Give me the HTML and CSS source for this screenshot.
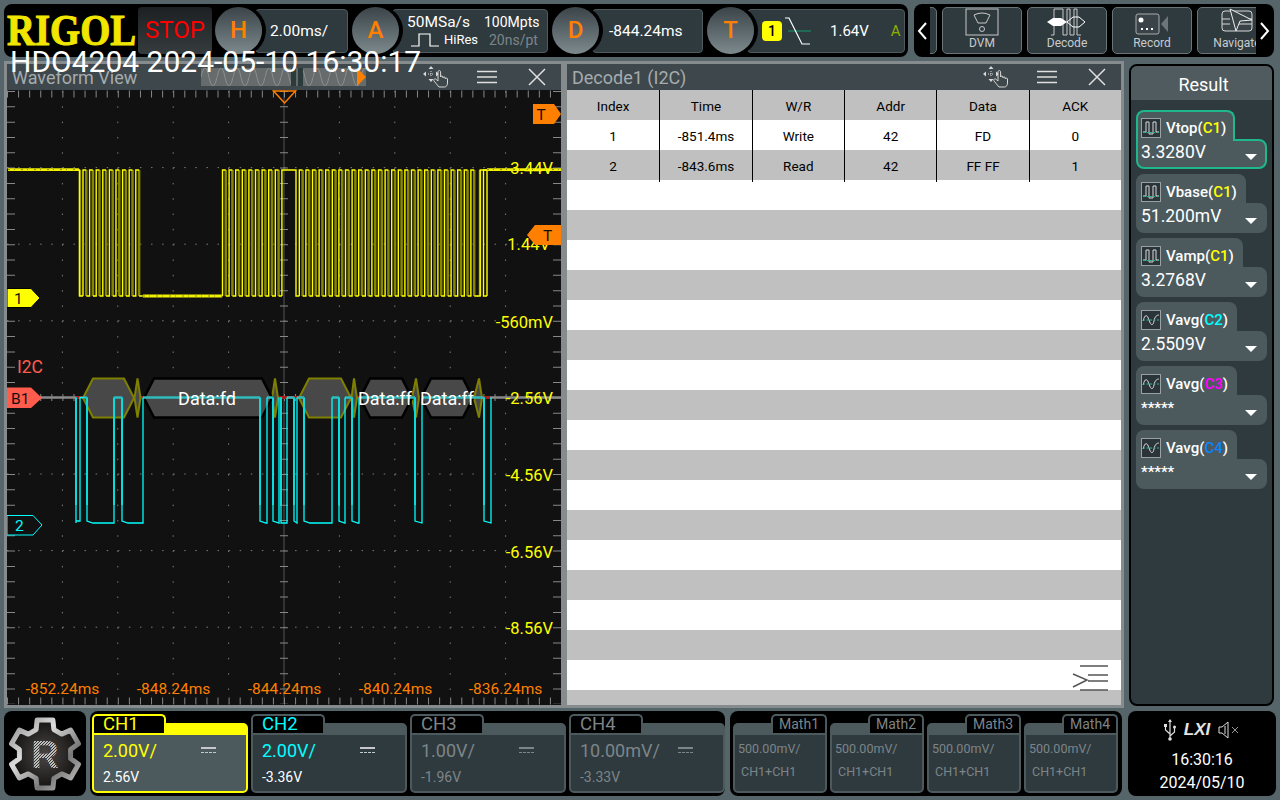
FILE: index.html

```html
<!DOCTYPE html>
<html lang="en">
<head>
  <meta charset="UTF-8" />
  <title>HDO4204 Decode</title>
  <link rel="stylesheet" href="styles.css">
</head>
<body>
  <svg class="defs" width="0" height="0">
    <symbol id="i-move" viewBox="0 0 28 22">
      <path d="M8 0l2.500 3h-5zM8 16l2.500-3h-5zM0 8l3-2.500v5zM16 8l-3-2.500v5z" fill="#d8d8d8"/>
      <path d="M5 8h6M8 5v6" stroke="#d8d8d8" stroke-dasharray="1 1" fill="none"/>
      <g transform="translate(9 3)">
        <path d="M7 18L2 12c-1-1.500 1-3 2.200-1.500L6 12V3c0-2 2.600-2 2.600 0v5c0-1.300 2.400-1.300 2.400 0v1c0-1.300 2.300-1.300 2.300 0v1c0-1.200 2.200-1.200 2.200 0v4c0 2-1 4-3 4z" fill="#3e474b" stroke="#d8d8d8"/>
      </g>
    </symbol>
    <symbol id="i-menu" viewBox="0 0 20 14">
      <path d="M0 1.500h20M0 7h20M0 12.500h20" stroke="#e0e0e0" stroke-width="1.500" fill="none"/>
    </symbol>
    <symbol id="i-close" viewBox="0 0 18 18">
      <path d="M1 1l16 16M17 1L1 17" stroke="#e0e0e0" stroke-width="1.500" fill="none"/>
    </symbol>
    <symbol id="i-meas" viewBox="0 0 20 20">
      <rect x=".5" y=".5" width="19" height="19" fill="#2b3438" stroke="#9aa2a4"/>
      <path d="M2 14h3V4h3v12h4V4h3v10h3" fill="none" stroke="#d8d8d8"/>
      <path d="M2 14.500h16" stroke="#25b98e" stroke-dasharray="2 1.500"/>
    </symbol>
    <symbol id="i-avg" viewBox="0 0 20 20">
      <rect x=".5" y=".5" width="19" height="19" fill="#2b3438" stroke="#9aa2a4"/>
      <path d="M2 11C4 4 6 4 8 10s4 6 5 1 3-6 5-6" fill="none" stroke="#d8d8d8"/>
      <path d="M2 10h16" stroke="#25b98e" stroke-dasharray="2 1.500"/>
    </symbol>
    <path id="clk9b" d="m0 296v-126h3.300m0 126h3.300v-126h3.300m0 126h3.300v-126h3.300m0 126h3.300v-126h3.300m0 126h3.300v-126h3.300m0 126h3.300v-126h3.300m0 126h3.300v-126h3.300m0 126h3.300v-126h3.300m0 126h3.300v-126h3.300m0 126h3.300"/>
    <path id="clk9d" d="m3.300 170v126m6.600-126v126m6.600-126v126m6.600-126v126m6.600-126v126m6.600-126v126m6.600-126v126m6.600-126v126m6.600-126v126"/>
  </svg>

  <div class="stamp">HDO4204 2024-05-10 16:30:17</div>

  <header class="top">
    <div class="status-bar">
      <div class="logo"><span>RIGOL</span></div>
      <div class="stop">STOP</div>

      <div class="knob">H</div>
      <div class="readout r-h"><span class="big">2.00ms/</span></div>

      <div class="knob">A</div>
      <div class="readout r-a">
        <span class="big">50MSa/s</span>
        <span class="mid">100Mpts</span>
        <span class="hires">
          <svg width="28" height="14" viewBox="0 0 28 14"><path d="M0 13h8V1h11v12h9" fill="none" stroke="#fff" stroke-width="1.200"/></svg>
          HiRes
        </span>
        <span class="mid dim pts">20ns/pt</span>
      </div>

      <div class="knob">D</div>
      <div class="readout r-d"><span class="big">-844.24ms</span></div>

      <div class="knob">T</div>
      <div class="readout r-t">
        <span class="badge">1</span>
        <svg class="slope" width="26" height="30" viewBox="0 0 26 30"><path d="M3 15h24" stroke="#1f7a5e" stroke-width="1.500"/><path d="M0 2h4l13 26h8" fill="none" stroke="#fff" stroke-width="1.200"/></svg>
        <span class="big trig-level">1.64V</span>
        <span class="trig-src">A</span>
      </div>
    </div>

    <nav class="menu-bar">
      <div class="arrow"><svg width="12" height="20" viewBox="0 0 12 20"><path d="M10 2L3 10l7 8" fill="none" stroke="#fff" stroke-width="2"/></svg></div>
      <div class="menu-cards">
        <div class="menu-card"></div>
        <div class="menu-card">
          <svg width="34" height="28" viewBox="0 0 34 28"><rect x="1" y="1" width="32" height="26" fill="none" stroke="#c8c8c8"/><path d="M9 7q8-4 16 0l-4 8h-8z" fill="none" stroke="#c8c8c8"/><circle cx="17" cy="21" r="2.500" fill="none" stroke="#c8c8c8"/></svg>
          <span>DVM</span>
        </div>
        <div class="menu-card">
          <svg width="40" height="28" viewBox="0 0 40 28"><path d="M4 27h3V1h9v26h4V1h3v26h4V1h3v26h4" fill="none" stroke="#c8c8c8"/><path d="M0 14l6-4h8l6 4-6 4H6z" fill="#fff"/><path d="M20 14l6-5h6l6 5-6 5h-6z" fill="none" stroke="#fff"/></svg>
          <span>Decode</span>
        </div>
        <div class="menu-card">
          <svg width="34" height="24" viewBox="0 0 34 24"><rect x="1" y="2" width="23" height="20" rx="2" fill="#3a4448" stroke="#aaa"/><circle cx="6" cy="8" r="2.500" fill="#fff"/><path d="M6 17h2M11 17h2M16 17h2" stroke="#fff" stroke-width="2"/><path d="M26 12l7-8v16z" fill="#6d7578"/></svg>
          <span>Record</span>
        </div>
        <div class="menu-card">
          <svg width="34" height="28" viewBox="0 0 34 28"><rect x="2" y="3" width="30" height="20" rx="3" fill="#3a4448" stroke="#d8d8d8"/><path d="M2 11h8M2 16h8M20 11h12M18 16h14" stroke="#d8d8d8"/><path d="M10 1l22 11-12 1-4 10z" fill="#3a4448" stroke="#eee"/></svg>
          <span>Navigate</span>
        </div>
      </div>
      <div class="arrow"><svg width="12" height="20" viewBox="0 0 12 20"><path d="M2 2l7 8-7 8" fill="none" stroke="#fff" stroke-width="2"/></svg></div>
    </nav>
  </header>

  <main class="main">
    <section class="win">
      <div class="win-title">
        <span class="win-name">Waveform View</span>
        <svg class="thumb" width="165" height="18" viewBox="0 0 165 18">
          <defs><pattern id="sine" width="16" height="18" patternUnits="userSpaceOnUse"><path d="M0 9Q4-9 8 9t8 0" fill="none" stroke="#8e8e8e"/></pattern></defs>
          <rect width="165" height="18" fill="#666b6c"/>
          <rect width="165" height="18" fill="url(#sine)"/>
          <rect x="90" width="12" height="18" fill="#2b3a3a"/>
          <path d="M96 0v18" stroke="#9a9a9a"/>
          <path d="M156 0l9 9-9 9z" fill="#ff8000"/>
        </svg>
        <div class="win-tools">
          <svg class="t-move"><use href="#i-move"/></svg>
          <svg class="t-menu"><use href="#i-menu"/></svg>
          <svg class="t-close"><use href="#i-close"/></svg>
        </div>
      </div>

      <svg class="plot" viewBox="7 90 554 615" width="554" height="615">
        <rect x="7" y="90" width="554" height="615" fill="#111"/>
        <!-- grid -->
        <g class="grid-dots-v">
          <path d="M62.400 91V704M117.800 91V704M173.200 91V704M228.600 91V704M339.400 91V704M394.800 91V704M450.200 91V704M505.600 91V704"/>
        </g>
        <g class="grid-dots-h">
          <path d="M7 167.600H561M7 244.200H561M7 320.800H561M7 474H561M7 550.600H561M7 627.200H561"/>
        </g>
        <path class="axis" d="M284 91V704"/>
        <path class="ticks-v" d="M11 91V704M284 91V704M557 91V704"/>
        <path class="ticks-h" d="M7 94H561M7 701H561M7 397.400H561"/>

        <!-- decode bus -->
        <path d="M40 397.500H76M490 397.500H561" stroke="#8a8a8a" stroke-width="2.500"/>
        <path d="M76 397.500H490" stroke="#a81c1c" stroke-width="3"/>
        <g class="bus-addr">
          <polygon points="83,398 93,378.500 124,378.500 134,398 124,417.500 93,417.500"/>
          <polygon points="299,398 309,378.500 341,378.500 351,398 341,417.500 309,417.500"/>
          <polygon points="134.500,398 137.500,378.500 140.500,398 137.500,417.500"/>
          <polygon points="272,398 275,378.500 278,398 275,417.500"/>
          <polygon points="351.500,398 354,378.500 357,398 354,417.500"/>
          <polygon points="412,398 416,378.500 419,398 416,417.500"/>
          <polygon points="474,398 479,378.500 482,398 479,417.500"/>
        </g>
        <g class="bus-data">
          <polygon points="144,398 154,378.500 262,378.500 272,398 262,417.500 154,417.500"/>
          <polygon points="360,398 370,378.500 402,378.500 412,398 402,417.500 370,417.500"/>
          <polygon points="421,398 431,378.500 463,378.500 473,398 463,417.500 431,417.500"/>
        </g>

        <!-- CH2 -->
        <path class="teal" d="M84 397.500H87M114 397.500H122M143 397.500H260M267 397.500H273M287 397.500H294M297 397.500H304M332 397.500H339M345 397.500H352M359 397.500H415M422 397.500H484"/>
        <path class="teal-edge" d="M76 397V505M87 397V505M114 397V505M122 397V505M260 397V505M273 397V505M281 397V505M294 397V505M304 397V505M339 397V505M352 397V505M415 397V505M484 397V505"/>
        <path class="cyan" d="M76 523V397.500M76 521H80V397.500H84M87 397.500V521l6 2H114V397.500M122 397.500V521l6 2H143V397.500M260 397.500V521l6 2H267V397.500M273 397.500V521l6 2V397.500M281 397.500V523H287V397.500M294 397.500V521l3 2V397.500M304 397.500V521l6 2H332V397.500M339 397.500V521l6 2V397.500M352 397.500V521l6 2H359V397.500M415 397.500V521l7 2V397.500M484 397.500V521l7 2V397.500"/>

        <!-- CH1 -->
        <g class="ch1-dim">
          <use href="#clk9d" x="83"/>
          <use href="#clk9d" x="222.500"/>
          <use href="#clk9d" x="299.300"/>
          <use href="#clk9d" x="358.700"/>
          <use href="#clk9d" x="418.100"/>
          <path d="M80 170V296M480 170V296"/>
        </g>
        <g class="ch1">
          <path d="M8 170H79.500V296H83M142.400 296H222.500M281.900 296V170H296V296H299.300M476.900 296H480.200V170H487V296"/>
          <use href="#clk9b" x="83"/>
          <use href="#clk9b" x="222.500"/>
          <use href="#clk9b" x="299.300"/>
          <use href="#clk9b" x="358.700"/>
          <use href="#clk9b" x="418.100"/>
          <path d="M487 296h-3.500V170H561"/>
        </g>
        <path class="ch1-flat" d="M8 169.600H79M143 296H222M487 169.600H561"/>
        <path class="ch1-noise" d="M8 169.600H79M143 296H222M487 169.600H561"/>

        <!-- labels -->
        <g class="volts">
          <text x="553" y="174">3.44V</text>
          <text x="550" y="250">1.44V</text>
          <text x="553" y="328">-560mV</text>
          <text x="553" y="404">-2.56V</text>
          <text x="553" y="481">-4.56V</text>
          <text x="553" y="558">-6.56V</text>
          <text x="553" y="634">-8.56V</text>
        </g>
        <g class="times">
          <text x="62.500" y="694">-852.24ms</text>
          <text x="173.500" y="694">-848.24ms</text>
          <text x="284.500" y="694">-844.24ms</text>
          <text x="395.500" y="694">-840.24ms</text>
          <text x="505.500" y="694">-836.24ms</text>
        </g>
        <text class="bus-name" x="17" y="373">I2C</text>
        <g class="bus-text">
          <text x="207" y="405">Data:fd</text>
          <text x="385" y="405">Data:ff</text>
          <text x="447" y="405">Data:ff</text>
        </g>

        <!-- markers -->
        <polygon points="7,288.500 31,288.500 40,298 31,307.500 7,307.500" fill="#ff0" stroke="#000"/>
        <text class="mark" x="14" y="304">1</text>
        <polygon points="7,387.500 31,387.500 42,398 31,408 7,408" fill="#ff5c4d"/>
        <text class="mark" x="11" y="404">B1</text>
        <polygon points="7,515.500 33,515.500 42,525 33,535 7,535" fill="#111" stroke="#0ff"/>
        <text class="mark cy" x="15" y="531">2</text>
        <polygon points="533,104 554,104 561,114 554,124 533,124" fill="#ff8000"/>
        <text class="mark" x="536.500" y="120">T</text>
        <polygon points="527,235 535,225 561,225 561,245 535,245" fill="#ff8000"/>
        <text class="mark" x="543" y="241">T</text>
        <polygon points="273.500,91 295.500,91 284.500,103" fill="none" stroke="#ff8000" stroke-width="1.500"/>
      </svg>
    </section>

    <section class="win">
      <div class="win-title">
        <span class="win-name">Decode1 (I2C)</span>
        <div class="win-tools">
          <svg class="t-move"><use href="#i-move"/></svg>
          <svg class="t-menu"><use href="#i-menu"/></svg>
          <svg class="t-close"><use href="#i-close"/></svg>
        </div>
      </div>
      <div class="table">
        <div class="row"><span>Index</span><span>Time</span><span>W/R</span><span>Addr</span><span>Data</span><span>ACK</span></div>
        <div class="row"><span>1</span><span>-851.4ms</span><span>Write</span><span>42</span><span>FD</span><span>0</span></div>
        <div class="row"><span>2</span><span>-843.6ms</span><span>Read</span><span>42</span><span>FF FF</span><span>1</span></div>
        <div class="row"></div><div class="row"></div><div class="row"></div><div class="row"></div>
        <div class="row"></div><div class="row"></div><div class="row"></div><div class="row"></div>
        <div class="row"></div><div class="row"></div><div class="row"></div><div class="row"></div>
        <div class="row"></div><div class="row"></div><div class="row"></div><div class="row"></div>
        <div class="row"></div><div class="row"></div>
        <svg class="collapse" width="36" height="26" viewBox="0 0 36 26">
          <path d="M1 9l14 6L1 22M8 1h28M16 10h20M16 16h20M8 25h28" fill="none" stroke="#555" stroke-width="1.500"/>
        </svg>
      </div>
    </section>

    <aside class="result">
      <div class="result-title">Result</div>
      <div class="result-list">
        <div class="meas active">
          <div class="meas-head"><svg class="meas-icon"><use href="#i-meas"/></svg><span>Vtop(<b class="c1">C1</b>)</span></div>
          <div class="meas-val"><span>3.3280V</span><i></i></div>
        </div>
        <div class="meas">
          <div class="meas-head"><svg class="meas-icon"><use href="#i-meas"/></svg><span>Vbase(<b class="c1">C1</b>)</span></div>
          <div class="meas-val"><span>51.200mV</span><i></i></div>
        </div>
        <div class="meas">
          <div class="meas-head"><svg class="meas-icon"><use href="#i-meas"/></svg><span>Vamp(<b class="c1">C1</b>)</span></div>
          <div class="meas-val"><span>3.2768V</span><i></i></div>
        </div>
        <div class="meas">
          <div class="meas-head"><svg class="meas-icon"><use href="#i-avg"/></svg><span>Vavg(<b class="c2">C2</b>)</span></div>
          <div class="meas-val"><span>2.5509V</span><i></i></div>
        </div>
        <div class="meas">
          <div class="meas-head"><svg class="meas-icon"><use href="#i-avg"/></svg><span>Vavg(<b class="c3">C3</b>)</span></div>
          <div class="meas-val"><span class="stars">*****</span><i></i></div>
        </div>
        <div class="meas">
          <div class="meas-head"><svg class="meas-icon"><use href="#i-avg"/></svg><span>Vavg(<b class="c4">C4</b>)</span></div>
          <div class="meas-val"><span class="stars">*****</span><i></i></div>
        </div>
      </div>
    </aside>
  </main>

  <footer class="bottom">
    <div class="gear-box">
      <svg width="74" height="74" viewBox="-1 -1 74 74">
        <defs>
          <linearGradient id="steel" x1="0" y1="0" x2="1" y2="1">
            <stop offset="0" stop-color="#8d8d8d"/><stop offset=".35" stop-color="#dcdcdc"/><stop offset=".7" stop-color="#777"/><stop offset="1" stop-color="#c8c8c8"/>
          </linearGradient>
          <radialGradient id="gear-in">
            <stop offset="0" stop-color="#4a4644"/><stop offset="1" stop-color="#161514"/>
          </radialGradient>
          <pattern id="hatch" width="3" height="3" patternUnits="userSpaceOnUse">
            <rect width="3" height="3" fill="#bdbdbd"/><path d="M0 3L3 0" stroke="#333"/>
          </pattern>
        </defs>
        <polygon class="gear" points="27.1,11.600 28.100,1.900 43.900,1.900 44.900,11.600 52.700,16.100 61.600,12.100 69.500,25.800 61.600,31.500 61.600,40.500 69.500,46.200 61.600,59.900 52.700,55.900 44.900,60.400 43.900,70.100 28.100,70.100 27.100,60.400 19.300,55.900 10.400,59.900 2.500,46.200 10.400,40.500 10.400,31.500 2.500,25.800 10.400,12.100 19.300,16.100"/>
        <text class="gear-r" x="36" y="50">R</text>
      </svg>
    </div>

    <div class="channels">
      <div class="ch ch-1">
        <div class="ch-head"><span class="ch-tab">CH1</span><span class="ch-fill"></span></div>
        <div class="ch-body">
          <div class="ch-row"><span class="ch-scale">2.00V/</span><span class="coupling"></span></div>
          <div class="ch-off">2.56V</div>
        </div>
      </div>
      <div class="ch ch-2">
        <div class="ch-head"><span class="ch-tab">CH2</span><span class="ch-fill"></span></div>
        <div class="ch-body">
          <div class="ch-row"><span class="ch-scale">2.00V/</span><span class="coupling"></span></div>
          <div class="ch-off">-3.36V</div>
        </div>
      </div>
      <div class="ch ch-dis">
        <div class="ch-head"><span class="ch-tab">CH3</span><span class="ch-fill"></span></div>
        <div class="ch-body">
          <div class="ch-row"><span class="ch-scale">1.00V/</span><span class="coupling"></span></div>
          <div class="ch-off">-1.96V</div>
        </div>
      </div>
      <div class="ch ch-dis">
        <div class="ch-head"><span class="ch-tab">CH4</span><span class="ch-fill"></span></div>
        <div class="ch-body">
          <div class="ch-row"><span class="ch-scale">10.00mV/</span><span class="coupling"></span></div>
          <div class="ch-off">-3.33V</div>
        </div>
      </div>
    </div>

    <div class="maths">
      <div class="math">
        <div class="math-head"><span class="math-fill"></span><span class="math-tab">Math1</span></div>
        <div class="math-body"><span>500.00mV/</span><span class="math-src">CH1+CH1</span></div>
      </div>
      <div class="math">
        <div class="math-head"><span class="math-fill"></span><span class="math-tab">Math2</span></div>
        <div class="math-body"><span>500.00mV/</span><span class="math-src">CH1+CH1</span></div>
      </div>
      <div class="math">
        <div class="math-head"><span class="math-fill"></span><span class="math-tab">Math3</span></div>
        <div class="math-body"><span>500.00mV/</span><span class="math-src">CH1+CH1</span></div>
      </div>
      <div class="math">
        <div class="math-head"><span class="math-fill"></span><span class="math-tab">Math4</span></div>
        <div class="math-body"><span>500.00mV/</span><span class="math-src">CH1+CH1</span></div>
      </div>
    </div>

    <div class="clock">
      <div class="clock-icons">
        <svg width="12" height="22" viewBox="0 0 12 22"><path d="M6 1v20M6 15L1.500 11V7M6 17l4.500-4V9" fill="none" stroke="#ddd" stroke-width="1.200"/><path d="M6 0l2 3H4z" fill="#ddd"/><rect x="0" y="5" width="3" height="3" fill="#ddd"/><circle cx="10.500" cy="8" r="1.500" fill="#ddd"/><circle cx="6" cy="20" r="1.800" fill="#ddd"/></svg>
        <span class="lxi">LXI</span>
        <svg width="22" height="18" viewBox="0 0 22 18"><path d="M1 6v6h3l6 5V1L4 6z" fill="none" stroke="#ddd"/><path d="M7 5v8" stroke="#ddd"/><path d="M14 6l6 6M20 6l-6 6" stroke="#999"/></svg>
      </div>
      <div class="clock-time">16:30:16</div>
      <div class="clock-date">2024/05/10</div>
    </div>
  </footer>
</body>
</html>
```

FILE: styles.css

```css
* {
  box-sizing: border-box;
}

body {
  position: relative;
  margin: 0;
  width: 1280px;
  height: 800px;
  padding: 4px;
  overflow: hidden;
  background: #55656a;
  color: #fff;
  font-family: Roboto, "Liberation Sans", sans-serif;
}

.defs {
  position: absolute;
}

.stamp {
  position: absolute;
  left: 10px;
  top: 44px;
  z-index: 5;
  font-size: 30px;
  line-height: 36px;
  white-space: nowrap;
  color: #fff;
}

/* top bar */
.top {
  display: flex;
  gap: 6px;
  height: 53px;
}

.status-bar {
  display: flex;
  align-items: center;
  width: 904px;
  background: #000;
  border-radius: 8px;
}

.logo {
  width: 134px;
  padding-left: 3px;
}

.logo span {
  display: inline-block;
  font-family: "Liberation Serif", serif;
  font-weight: bold;
  font-size: 44px;
  line-height: 40px;
  color: #f2e600;
  transform: scaleX(.88);
  transform-origin: left center;
  -webkit-text-stroke: 1px #f2e600;
}

.stop {
  width: 74px;
  height: 47px;
  margin-right: 3px;
  border-radius: 4px;
  background: linear-gradient(#1c2022, #363c3e);
  color: #f00;
  font-size: 24px;
  line-height: 47px;
  text-align: center;
}

.knob {
  position: relative;
  z-index: 1;
  flex: none;
  width: 47px;
  height: 47px;
  border-radius: 50%;
  background: linear-gradient(#3b4448, #7d8a8e);
  box-shadow: 0 0 0 1px #000, 2px 0 0 2px #000;
  color: #ff8000;
  font-size: 24px;
  font-weight: 500;
  line-height: 47px;
  text-align: center;
}

.readout {
  height: 44px;
  margin: 0 4px 0 -7px;
  background: #2f3a3f;
  border: 1px solid #4e5a5e;
  border-radius: 4px;
  white-space: nowrap;
}

.big {
  font-size: 15.5px;
}

.mid {
  font-size: 14px;
}

.dim {
  color: #7d8588;
}

.pts {
  padding-left: 5px;
}

.r-h {
  display: flex;
  align-items: center;
  width: 93px;
  padding-left: 14px;
}

.r-a {
  display: grid;
  grid-template-columns: 77px 1fr;
  align-content: center;
  width: 156px;
  padding-left: 14px;
  line-height: 18px;
}

.hires {
  display: flex;
  align-items: center;
  gap: 5px;
  padding-left: 4px;
  font-size: 13px;
}

.r-d {
  display: flex;
  align-items: center;
  width: 111px;
  padding-left: 16px;
}

.r-t {
  display: flex;
  align-items: center;
  width: 158px;
  margin-right: 0;
  padding-left: 14px;
}

.badge {
  width: 20px;
  height: 20px;
  margin-right: 3px;
  border-radius: 4px;
  background: #ff0;
  color: #000;
  font-size: 14px;
  font-weight: 500;
  line-height: 20px;
  text-align: center;
}

.trig-level {
  margin-left: 19px;
  font-size: 15px;
}

.trig-src {
  margin-left: 22px;
  color: #8db000;
  font-size: 15px;
}

.menu-bar {
  display: flex;
  align-items: center;
  width: 360px;
  background: #000;
  border-radius: 8px;
}

.arrow {
  display: flex;
  justify-content: center;
  flex: none;
  width: 16px;
}

.arrow:last-child {
  width: 18px;
}

.menu-cards {
  display: flex;
  gap: 5px;
  width: 326px;
  overflow: hidden;
}

.menu-card {
  display: flex;
  flex: none;
  flex-direction: column;
  align-items: center;
  justify-content: flex-end;
  width: 80px;
  height: 47px;
  padding-bottom: 2px;
  background: #2f3a3f;
  border: 1px solid #6a7578;
  border-radius: 5px;
  color: #c8cccd;
  font-size: 12px;
  line-height: 15px;
}

.menu-card:first-child {
  margin-left: -73px;
}

/* main */
.main {
  display: flex;
  height: 647px;
  margin-top: 4px;
}

.win {
  display: flex;
  flex-direction: column;
  width: 560px;
  border: 3px solid #868c8e;
  background: #111;
}

.win-title {
  display: flex;
  align-items: center;
  flex: none;
  height: 26px;
  padding-left: 5px;
  background: #3e474b;
}

.win-name {
  color: #a6acae;
  font-size: 18px;
  white-space: nowrap;
}

.thumb {
  margin-left: 64px;
}

.win-tools {
  display: flex;
  align-items: center;
  margin-left: auto;
  padding-right: 15px;
}

.t-move {
  width: 28px;
  height: 22px;
  margin-right: 26px;
}

.t-menu {
  width: 20px;
  height: 14px;
  margin-right: 31px;
}

.t-close {
  width: 18px;
  height: 18px;
}

.plot {
  display: block;
  flex: none;
}

.grid-dots-v path {
  stroke: #7c7c7c;
  stroke-dasharray: 1.5 13.82;
  fill: none;
}

.grid-dots-h path {
  stroke: #7c7c7c;
  stroke-dasharray: 1.5 9.58;
  fill: none;
}

.axis {
  stroke: #555;
  fill: none;
}

.ticks-v {
  stroke: #888;
  stroke-width: 8px;
  stroke-dasharray: 1 14.32;
  fill: none;
}

.ticks-h {
  stroke: #888;
  stroke-width: 7px;
  stroke-dasharray: 1 10.08;
  fill: none;
}

.bus-addr polygon {
  fill: #484848;
  stroke: #7f7f00;
  stroke-width: 2px;
}

.bus-data polygon {
  fill: #484848;
  stroke: #000;
  stroke-width: 2.5px;
}

.teal {
  stroke: #2fbcbc;
  stroke-width: 2.5px;
  fill: none;
}

.teal-edge {
  stroke: #1a9a9a;
  stroke-width: 2px;
  fill: none;
}

.cyan {
  stroke: #0ff;
  stroke-width: 1.3px;
  fill: none;
}

.ch1-dim {
  stroke: #868600;
  stroke-width: 2.5px;
  fill: none;
}

.ch1 {
  stroke: #ff0;
  stroke-width: 1.4px;
  fill: none;
}

.ch1-flat {
  stroke: #f0f000;
  stroke-width: 2.8px;
  fill: none;
}

.ch1-noise {
  stroke: #8a8a00;
  stroke-width: 1px;
  stroke-dasharray: 2 4 1 6;
  fill: none;
}

.volts text {
  fill: #ff0;
  font-size: 16.5px;
  text-anchor: end;
}

.times text {
  fill: #ff8000;
  font-size: 15.5px;
  text-anchor: middle;
}

.bus-name {
  fill: #ff5c4d;
  font-size: 17.5px;
}

.bus-text text {
  fill: #fff;
  font-size: 18px;
  text-anchor: middle;
}

.mark {
  fill: #111;
  font-size: 15.5px;
}

.mark.cy {
  fill: #0ff;
}

/* decode table */
.table {
  position: relative;
  flex: 1;
  overflow: hidden;
  background: #fff;
}

.row {
  display: grid;
  grid-template-columns: repeat(6, 1fr);
  height: 30px;
  color: #000;
  font-size: 13.5px;
  line-height: 32px;
  text-align: center;
}

.row:nth-child(odd) {
  background: #c0c0c0;
}

.row span + span {
  border-left: 1px solid #000;
}

.collapse {
  position: absolute;
  right: 13px;
  bottom: 14px;
}

/* result panel */
.result {
  display: flex;
  flex-direction: column;
  width: 145px;
  height: 642px;
  margin: 3px 0 0 5px;
  background: #2f3a3f;
  border: 2px solid #000;
  border-radius: 8px;
  overflow: hidden;
}

.result-title {
  flex: none;
  height: 34px;
  padding-left: 4px;
  background: #4f5b5e;
  font-size: 18px;
  line-height: 38px;
  text-align: center;
}

.result-list {
  display: flex;
  flex-direction: column;
  gap: 5px;
  padding: 10px 5px;
}

.meas-head {
  position: relative;
  z-index: 1;
  display: flex;
  align-items: center;
  gap: 5px;
  width: fit-content;
  height: 31px;
  margin-bottom: -2px;
  padding: 2px 7px 0 3px;
  background: #4c5a5e;
  border: 2px solid transparent;
  border-bottom: 0;
  border-radius: 8px 8px 0 0;
  font-size: 15px;
  font-weight: 500;
  white-space: nowrap;
}

.meas-icon {
  width: 20px;
  height: 20px;
}

.meas-head b {
  font-weight: 500;
}

.c1 { color: #ff0; }
.c2 { color: #0ff; }
.c3 { color: #f0f; }
.c4 { color: #0a84ff; }

.meas-val {
  display: flex;
  align-items: center;
  justify-content: space-between;
  height: 30px;
  padding: 0 8px 4px 3px;
  background: #4c5a5e;
  border: 2px solid transparent;
  border-radius: 0 8px 8px 8px;
  font-size: 17.5px;
}

.meas-val i {
  margin-top: 9px;
  border-style: solid;
  border-width: 6px 6px 0;
  border-color: #fff transparent transparent;
}

.stars {
  font-size: 15px;
  font-weight: 500;
}

.active .meas-head,
.active .meas-val {
  border-color: #1fb88a;
}

/* bottom bar */
.bottom {
  display: flex;
  height: 85px;
  margin-top: 3px;
}

.gear-box {
  display: flex;
  align-items: center;
  justify-content: center;
  width: 82px;
  margin-right: 4px;
  background: #000;
  border-radius: 8px;
}

.gear {
  fill: url(#gear-in);
  stroke: url(#steel);
  stroke-width: 5px;
  stroke-linejoin: round;
}

.gear-r {
  fill: url(#hatch);
  font-family: "Liberation Sans", sans-serif;
  font-size: 38px;
  font-weight: bold;
  text-anchor: middle;
}

.channels {
  display: flex;
  gap: 3px;
  width: 635px;
  padding: 3px 0 3px 2px;
  background: #000;
  border-radius: 8px;
}

.ch {
  --accent: #4c5a5e;
  display: flex;
  flex-direction: column;
  width: 156px;
  color: #7d8588;
}

.ch-head {
  display: flex;
  flex: none;
  height: 19px;
}

.ch-tab {
  width: 74px;
  padding-left: 9px;
  background: #000;
  border: 2px solid var(--accent);
  border-bottom: 0;
  border-radius: 5px 5px 0 0;
  font-size: 18.5px;
  line-height: 17px;
}

.ch-fill {
  flex: 1;
  margin-top: 9px;
  background: var(--accent);
  border-radius: 0 5px 0 0;
}

.ch-body {
  flex: 1;
  padding: 2px 0 0 9px;
  background: #2f3a3f;
  border: 2px solid var(--accent);
  border-radius: 0 0 5px 5px;
}

.ch-row {
  display: flex;
  align-items: center;
  height: 26px;
}

.ch-scale {
  width: 98px;
  font-size: 18px;
}

.coupling {
  width: 15px;
  height: 6px;
  border-top: 2px solid currentColor;
  border-bottom: 1px dashed currentColor;
  color: #c4c8c9;
}

.ch-off {
  margin-top: 6px;
  color: #fff;
  font-size: 14px;
}

.ch-1 {
  --accent: #ff0;
}

.ch-1 .ch-tab,
.ch-1 .ch-scale {
  color: #ff0;
}

.ch-1 .ch-body {
  background: #4c5a5e;
}

.ch-2 .ch-tab,
.ch-2 .ch-scale {
  color: #0ff;
}

.ch-dis .ch-off,
.ch-dis .coupling {
  color: #7d8588;
}

.maths {
  display: flex;
  gap: 3px;
  width: 392px;
  margin-left: 5px;
  padding: 3px 0 3px 3px;
  background: #000;
  border-radius: 8px;
}

.math {
  --accent: #4c5a5e;
  display: flex;
  flex-direction: column;
  width: 94px;
  color: #7d8588;
}

.math-head {
  display: flex;
  flex: none;
  height: 19px;
}

.math-fill {
  flex: 1;
  margin-top: 9px;
  background: var(--accent);
  border-radius: 5px 0 0 0;
}

.math-tab {
  width: 56px;
  background: #000;
  border: 2px solid var(--accent);
  border-bottom: 0;
  border-radius: 5px 5px 0 0;
  font-size: 14px;
  line-height: 17px;
  text-align: center;
}

.math-body {
  display: flex;
  flex: 1;
  flex-direction: column;
  gap: 8px;
  padding: 6px 0 0 3px;
  background: #2f3a3f;
  border: 2px solid var(--accent);
  border-radius: 0 0 5px 5px;
  font-size: 12.5px;
  line-height: 15px;
}

.math-src {
  padding-left: 3px;
}

.clock {
  display: flex;
  flex-direction: column;
  align-items: center;
  width: 148px;
  margin-left: 6px;
  margin-right: -4px;
  background: #000;
  border-radius: 8px;
  font-size: 16px;
}

.clock-icons {
  display: flex;
  align-items: center;
  gap: 8px;
  height: 24px;
  margin-top: 7px;
}

.lxi {
  font-family: "Liberation Sans", sans-serif;
  font-size: 17px;
  font-style: italic;
  font-weight: bold;
  color: #e4e4e4;
}

.clock-time {
  margin-top: 9px;
  line-height: 18px;
}

.clock-date {
  margin-top: 5px;
  line-height: 18px;
}
```
